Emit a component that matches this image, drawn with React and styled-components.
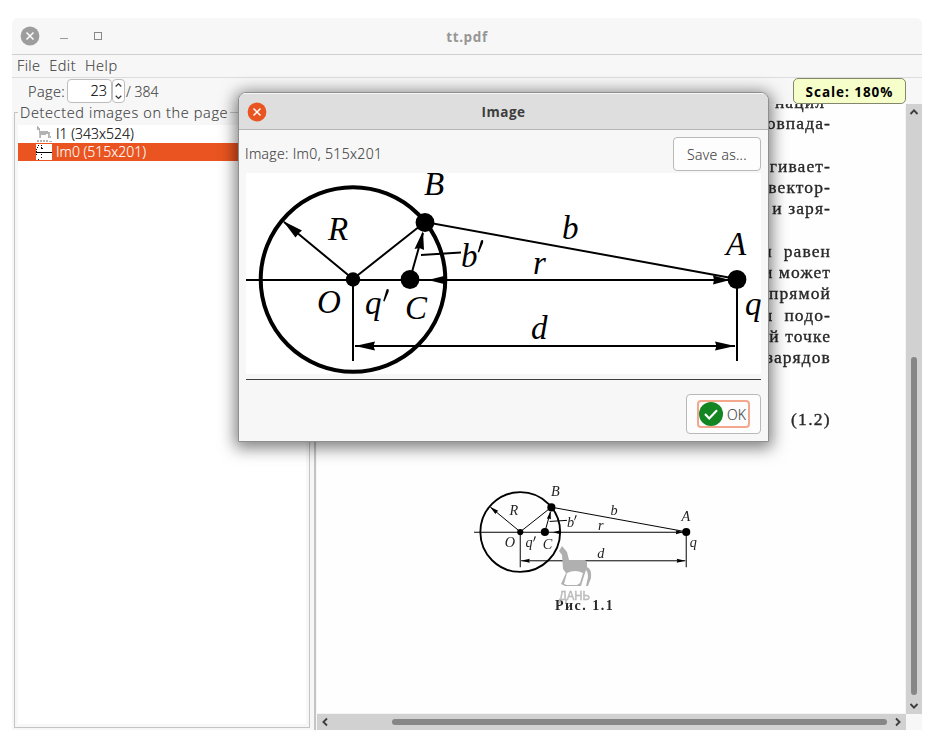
import React from "react";
import styled, { createGlobalStyle } from "styled-components";

const Global = createGlobalStyle`
  *, *::before, *::after { box-sizing: border-box; }
  body { margin: 0; background: #fff; }
  #root { font-family: "Open Sans", "Noto Sans", sans-serif; font-size: 14.5px; color: #3d3d3d; }
`;

const Desktop = styled.div`
  position: relative;
  width: 937px;
  height: 749px;
  padding: 18px 15px 19px 12px;
  overflow: hidden;
  background: #fff;
`;

const Window = styled.main`
  width: 910px;
  height: 712px;
  display: flex;
  flex-direction: column;
  background: #f7f7f7;
  border-radius: 6px 6px 0 0;
`;

const TitleBar = styled.header`
  height: 37px;
  flex: none;
  display: grid;
  grid-template-columns: 120px 1fr 120px;
  align-items: center;
  border-bottom: 1px solid #cfcfcf;
`;

const WindowButtons = styled.div`
  display: flex;
  align-items: center;
  padding-left: 8px;
  height: 36px;
`;

const Title = styled.h1`
  margin: 0;
  padding-top: ${(p) => p.$drop || 0}px;
  text-align: center;
  font-size: 13.5px;
  font-weight: 700;
  line-height: 20px;
  letter-spacing: ${(p) => p.$spacing || "0"};
  color: ${(p) => p.$color};
`;

const MenuBar = styled.nav`
  height: 23px;
  flex: none;
  display: flex;
  gap: 9px;
  padding-left: 5px;
  border-bottom: 1px solid #dcdcdc;
  line-height: 22px;
`;

const Label = styled.span`
  white-space: nowrap;
  font-weight: ${(p) => p.$weight || 300};
  font-size: ${(p) => p.$size || "14.5px"};
  letter-spacing: ${(p) => p.$spacing || "0"};
  -webkit-text-stroke: ${(p) => (p.$weight ? "0" : "0.15px currentColor")};
`;

const Toolbar = styled.div`
  height: 26px;
  flex: none;
  display: flex;
  align-items: center;
  padding-left: 16px;
`;

const PageLabel = styled.div`
  width: 39px;
`;

const PageInput = styled.div`
  width: 45px;
  height: 24px;
  padding-right: 4px;
  border: 1px solid #bdbdbd;
  border-radius: 4px;
  background: #fff;
  color: #000;
  text-align: right;
  line-height: 22px;
`;

const Stepper = styled.div`
  width: 13px;
  height: 24px;
  margin-right: 1px;
  border: 1px solid #bdbdbd;
  border-radius: 4px;
  background: #fff;
  display: grid;
  place-items: center;
`;

const ScaleBadge = styled.div`
  position: relative;
  width: 113px;
  height: 26px;
  margin-left: auto;
  margin-right: 16px;
  border: 1px solid #85876c;
  border-radius: 5px;
  background: #f6ffca;
  color: #000;
  text-align: center;
  line-height: 25px;
`;

const Workspace = styled.div`
  flex: 1;
  min-height: 0;
  display: flex;
`;

const Sidebar = styled.aside`
  width: 302px;
  flex: none;
  padding: 0 4px 2px 2px;
`;

const ImageGroup = styled.fieldset`
  margin: 0;
  padding: 4px 3px 3px;
  height: 624px;
  border: 1px solid #c4c4c4;
  min-width: 0;
  display: flex;
  flex-direction: column;
`;

const GroupTitle = styled.legend`
  padding: 0 2px;
  height: 17px;
  line-height: 17px;
`;

const ImageList = styled.div`
  height: 100%;
  background: #fff;
`;

const ImageRow = styled.div`
  height: 18px;
  padding-left: 18px;
  display: flex;
  align-items: center;
  gap: 4px;
  line-height: 18px;
  color: ${(p) => (p.$selected ? "#fff" : "#000")};
  background: ${(p) => (p.$selected ? "#e95420" : "transparent")};
`;

const Divider = styled.div`
  width: 2px;
  flex: none;
  margin-right: 1px;
  background: #c4c4c4;
`;

const Viewer = styled.section`
  flex: 1;
  display: grid;
  grid-template-columns: 1fr 16px;
  grid-template-rows: 1fr 16px;
  min-width: 0;
`;

const Paper = styled.article`
  position: relative;
  overflow: hidden;
  background: #fefefe;
  border-right: 1px solid #f4f4f4;
  border-bottom: 1px solid #f4f4f4;
  padding-right: 74px;
  color: #2a2a2a;
  font-family: "Liberation Serif", serif;
  font-size: 17.5px;
`;

const TextBlock = styled.div`
  display: flex;
  flex-direction: column;
  align-items: flex-end;
  margin-top: ${(p) => p.$top || 0}px;
  filter: blur(0.45px);
`;

const TextLine = styled.div`
  height: 21.35px;
  line-height: 21.35px;
  white-space: nowrap;
  padding-right: ${(p) => p.$inset || 0}px;
  letter-spacing: ${(p) => p.$spacing || "1.1px"};
  -webkit-text-stroke: 0.35px #222;
`;

const FigureBlock = styled.figure`
  margin: 56px 0 0 157px;
  width: 223px;
  filter: blur(0.4px);
`;

const FigureCaption = styled.figcaption`
  margin: 24px 0 0 81px;
  font-size: 14px;
  font-weight: 700;
  line-height: 18px;
  letter-spacing: 1.5px;
  white-space: nowrap;
`;

const Stamp = styled.svg`
  position: absolute;
  left: 84px;
  top: 59px;
  overflow: visible;
`;

const DrawingSvg = styled.svg`
  display: block;
  overflow: ${(p) => (p.$clip ? "hidden" : "visible")};
`;

const ScrollTrack = styled.div`
  display: flex;
  flex-direction: ${(p) => (p.$vertical ? "column" : "row")};
  align-items: center;
  justify-content: space-between;
  background: #d1d1d1;
  padding: ${(p) => (p.$vertical ? "3px 0" : "0 3px")};
`;

const ScrollThumb = styled.div`
  width: ${(p) => (p.$vertical ? "6px" : "495px")};
  height: ${(p) => (p.$vertical ? "338px" : "6px")};
  margin: ${(p) => (p.$vertical ? "auto 0 6px" : "0 6px 0 auto")};
  border-radius: 3px;
  background: #868686;
`;

const Dialog = styled.section`
  position: absolute;
  left: 238px;
  top: 92px;
  width: 531px;
  height: 350px;
  border: 1px solid #8e8e8e;
  border-radius: 8px 8px 0 0;
  background: #f7f7f7;
  box-shadow: 0 3px 16px 3px rgba(0, 0, 0, 0.5);
  overflow: hidden;
`;

const DialogTitleBar = styled.header`
  height: 37px;
  display: grid;
  grid-template-columns: 60px 1fr 60px;
  align-items: center;
  padding-left: 8px;
  padding-right: 8px;
  background: #dedede;
  border-top: 1px solid #f6f6f6;
  border-bottom: 1px solid #b5b5b5;
`;

const DialogBody = styled.div`
  padding: 7px 7px 0;
`;

const InfoRow = styled.div`
  height: 36px;
  margin-left: -1px;
  display: flex;
  justify-content: space-between;
  align-items: flex-start;
  line-height: 34px;
`;

const Button = styled.button`
  width: ${(p) => p.$width}px;
  height: ${(p) => p.$height}px;
  padding: 0;
  border: 1px solid #b9b9b9;
  border-radius: 4px;
  background: #fdfdfd;
  color: #3d3d3d;
  font-family: inherit;
  display: grid;
  place-items: center;
`;

const ImageView = styled.div`
  width: 515px;
  height: 201px;
  background: #fff;
`;

const ActionRow = styled.footer`
  margin-top: 5px;
  padding-top: 14px;
  border-top: 1px solid #3f3f3f;
  display: flex;
  justify-content: flex-end;
`;

const FocusRing = styled.span`
  width: 53px;
  height: 28px;
  border: 2px solid #f3a88e;
  border-radius: 4px;
  display: flex;
  align-items: center;
  gap: 4px;
`;

const CloseIcon = ({ color }) => (
  <svg width="20" height="20" viewBox="0 0 20 20">
    <circle cx="10" cy="10" r="9.4" fill={color} />
    <path d="M6.5 6.5l7 7M13.5 6.5l-7 7" stroke="#fff" strokeWidth="1.5" />
  </svg>
);

const WindowIcons = () => (
  <svg width="76" height="20" viewBox="0 0 76 20">
    <path d="M20 12.5h8" stroke="#999" />
    <rect x="54.5" y="6.5" width="7" height="7" fill="none" stroke="#888" />
  </svg>
);

const turns = { up: 0, right: 90, down: 180, left: 270 };
const Chevron = ({ to }) => (
  <svg width="10" height="10" viewBox="0 0 10 10">
    <path
      d="M1.5 7L5 3.4L8.5 7"
      fill="none"
      stroke="#3c3c3c"
      strokeWidth="1.8"
      transform={`rotate(${turns[to]} 5 5)`}
    />
  </svg>
);

const StepperIcon = () => (
  <svg width="9" height="20" viewBox="0 0 9 20">
    <path d="M1.7 5.5l2.8-2.7 2.8 2.7M1.7 14.7l2.8 2.7 2.8-2.7" fill="none" stroke="#333" strokeWidth="1.2" />
  </svg>
);

const CheckIcon = () => (
  <svg width="24" height="24" viewBox="0 0 24 24">
    <circle cx="12" cy="12" r="12" fill="#148523" />
    <path d="M6 12l4.2 4.4L18 8.3" fill="none" stroke="#fff" strokeWidth="2.2" />
  </svg>
);

const DeerIcon = () => (
  <svg width="16" height="16" viewBox="0 0 16 16" shapeRendering="crispEdges">
    <path d="M1 0h1v1h1v1h1v3h7l2 1h1v4h1v2h-1v-3h-1v3h-1V8h-2v1H5v3H4V7H3V4H1zM1 14h2v2H1zM4 14h2v2H4zM7 14h2v2H7zM10 14h2v2h-2zM13 15h3v1h-3z" fill="#b3b3b3" />
    <path d="M3 7h1v5H3zM13 8h1v4h-1z" fill="#c4c4c4" />
  </svg>
);

const ThumbIcon = () => (
  <svg width="16" height="16" viewBox="0 0 16 16" shapeRendering="crispEdges">
    <path fill="#fff" d="M0 0h16v16H0z" />
    <path
      d="M0 8h16v1H0zM0 5h1v1H0zM0 7h1v1H0zM2 1h1v1H2zM1 3h1v1H1zM5 1h1v1H5zM5 3h1v2H5zM6 4h1v1H6zM5 10h1v1H5zM0 10h1v1H0zM2 15h1v1H2zM5 13h1v1H5z"
      fill="#000"
    />
  </svg>
);

const labels = [
  ["B", 178, 22],
  ["R", 82, 67],
  ["b", 316, 66],
  ["b", 215, 94],
  ["r", 287, 101],
  ["A", 480, 82],
  ["O", 71, 140],
  ["q", 119, 141],
  ["C", 159, 146],
  ["q", 499, 142],
  ["d", 285, 166],
];

const Diagram = ({ width, height, clip, weight = 0, textFill = "#000" }) => (
  <DrawingSvg width={width} height={height} viewBox="0 0 515 201" $clip={clip}>
    <g stroke="#000" strokeWidth={2 + weight} fill="none">
      <circle cx="107" cy="106.5" r="92.3" strokeWidth={4 + weight} />
      <path d="M0 107H491M107 107V188M491 107V188M109 173H489M107 106L38 49M107 106L179 49L491 106M164 106L177 60M175 82L215 79.5" />
    </g>
    <g fill="#000">
      <circle cx="107" cy="106.5" r="7.2" />
      <circle cx="164" cy="106.5" r="9.4" />
      <circle cx="179" cy="49.5" r="9.4" />
      <circle cx="491" cy="106.5" r="9.4" />
      <path d="M37 48L56 57.5L53 60L49.5 64.5ZM177 58L178 77L173.5 75L168.5 76ZM182 107L200 102.5L199 107L200 111.5ZM484 107L467 102.5L468 107L467 111.5ZM109 173L129 168.5L127.500 173L129 177.500ZM489 173L469 168.500L470.500 173L469 177.500Z" />
      <path d="M235 67.500Q238 66 237 70L233 79.500L231.700 79ZM140.500 116.500Q143.500 115 142.500 119L138.500 128.500L137.200 128Z" />
    </g>
    <g fontFamily='"Liberation Serif", serif' fontStyle="italic" fontSize="33" fill={textFill}>
      {labels.map(([text, x, y], i) => (
        <text key={i} x={x} y={y}>{text}</text>
      ))}
    </g>
  </DrawingSvg>
);

const StampDrawing = () => (
  <Stamp width="38" height="58" viewBox="0 0 38 58">
    <path d="M4 1L9 7L11 15H27L29 17V22Q34 24 33 33L30 41H28L30 32Q30 27 28 25L26 31L23 41H7L3 39L8 28L5 24L4 10L1 6Z" fill="#b0b0b0" />
    <path d="M9 28L6 39L9 40H19L22 38L25 28Q17 24 9 28" fill="#fefefe" />
    <text x="1" y="55" fontFamily='"Liberation Sans", sans-serif' fontSize="13.5" fill="#c6c6c6" stroke="#b2b2b2" strokeWidth=".5" textLength="31" lengthAdjust="spacingAndGlyphs">ДАНЬ</text>
  </Stamp>
);

const FigureFrame = styled.div`
  position: relative;
`;

export default function App() {
  return (
    <>
      <Global />
      <Desktop>
        <Window>
          <TitleBar>
            <WindowButtons>
              <CloseIcon color="#9d9d9d" />
              <WindowIcons />
            </WindowButtons>
            <Title $color="#969696" $spacing="0.6px" $drop={2}>tt.pdf</Title>
          </TitleBar>
          <MenuBar>
            <Label $spacing="0.35px">File</Label>
            <Label $spacing="0.5px">Edit</Label>
            <Label $spacing="0.6px">Help</Label>
          </MenuBar>
          <Toolbar>
            <PageLabel><Label $spacing="0.4px">Page:</Label></PageLabel>
            <PageInput><Label>23</Label></PageInput>
            <Stepper><StepperIcon /></Stepper>
            <Label $size="14px">/ 384</Label>
            <ScaleBadge><Label $weight={700} $size="13.5px" $spacing="0.95px">Scale: 180%</Label></ScaleBadge>
          </Toolbar>
          <Workspace>
            <Sidebar>
              <ImageGroup>
                <GroupTitle><Label $spacing="0.65px">Detected images on the page</Label></GroupTitle>
                <ImageList>
                  <ImageRow><DeerIcon /><Label $size="14px">I1 (343x524)</Label></ImageRow>
                  <ImageRow $selected><ThumbIcon /><Label $size="14px">Im0 (515x201)</Label></ImageRow>
                </ImageList>
              </ImageGroup>
            </Sidebar>
            <Divider />
            <Viewer>
              <Paper>
                <TextBlock $top={-12}>
                  <TextLine $inset={6}>- нацил</TextLine>
                  <TextLine>совпада-</TextLine>
                </TextBlock>
                <TextBlock $top={21}>
                  <TextLine>тягивает-</TextLine>
                  <TextLine>вектор-</TextLine>
                  <TextLine>и заря-</TextLine>
                </TextBlock>
                <TextBlock $top={21}>
                  <TextLine>и&nbsp; равен</TextLine>
                  <TextLine>и может</TextLine>
                  <TextLine>прямой</TextLine>
                  <TextLine>л&nbsp; подо-</TextLine>
                  <TextLine>й точке</TextLine>
                  <TextLine>зарядов</TextLine>
                </TextBlock>
                <TextBlock $top={40}>
                  <TextLine $spacing="1.3px">(1.2)</TextLine>
                </TextBlock>
                <FigureBlock>
                  <FigureFrame>
                    <Diagram width={222.6} height={86.9} weight={0.3} textFill="#222" />
                    <StampDrawing />
                  </FigureFrame>
                  <FigureCaption>Рис. 1.1</FigureCaption>
                </FigureBlock>
              </Paper>
              <ScrollTrack $vertical>
                <Chevron to="up" />
                <ScrollThumb $vertical />
                <Chevron to="down" />
              </ScrollTrack>
              <ScrollTrack>
                <Chevron to="left" />
                <ScrollThumb />
                <Chevron to="right" />
              </ScrollTrack>
            </Viewer>
          </Workspace>
        </Window>
        <Dialog>
          <DialogTitleBar>
            <CloseIcon color="#e95420" />
            <Title $color="#3d3d3d" $spacing="0.5px">Image</Title>
          </DialogTitleBar>
          <DialogBody>
            <InfoRow>
              <Label $size="14px" $spacing="0.35px">Image: Im0, 515x201</Label>
              <Button $width={88} $height={34}><Label $size="14px" $spacing="0.3px">Save as...</Label></Button>
            </InfoRow>
            <ImageView><Diagram width={515} height={201} clip /></ImageView>
            <ActionRow>
              <Button $width={75} $height={40}>
                <FocusRing><CheckIcon /><Label $size="14px">OK</Label></FocusRing>
              </Button>
            </ActionRow>
          </DialogBody>
        </Dialog>
      </Desktop>
    </>
  );
}
